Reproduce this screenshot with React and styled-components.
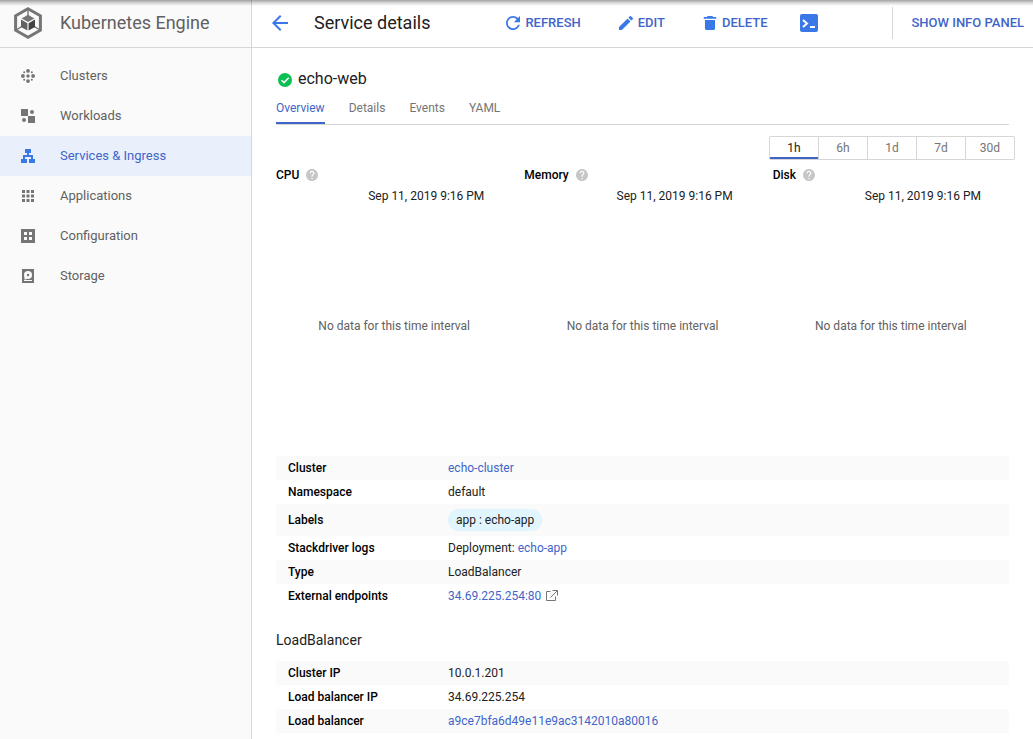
import React, { useState } from "react";
import styled, { createGlobalStyle, css } from "styled-components";

const color = {
  blue: "#3b78e7",
  link: "#3f65c9",
  grey: "#757575",
  text: "#212121",
  line: "#d6d6d6",
  stripe: "#fafafa",
};

const GlobalStyle = createGlobalStyle`
  *, *::before, *::after { box-sizing: border-box; }
  body {
    margin: 0;
    background: #fff;
    color: ${color.text};
    font: 400 12px/16px Roboto, "Liberation Sans", sans-serif;
  }
  button { font: inherit; color: inherit; background: none; border: 0; padding: 0; cursor: pointer; }
  a { color: ${color.link}; text-decoration: none; }
  h1, h2, h3, ul { margin: 0; padding: 0; }
  svg { display: block; flex: none; }
`;

const Page = styled.div`
  display: grid;
  grid-template-columns: 252px minmax(0, 1fr);
  min-height: 100vh;
`;

const TopShadow = styled.div`
  position: fixed;
  inset: 0 0 auto 0;
  height: 6px;
  background: linear-gradient(rgba(0, 0, 0, 0.36), rgba(0, 0, 0, 0.14) 50%, rgba(0, 0, 0, 0));
  pointer-events: none;
`;

const Sidebar = styled.aside`
  background: #fafafa;
  border-right: 1px solid ${color.line};
`;

const Brand = styled.div`
  display: flex;
  align-items: center;
  gap: 18px;
  height: 48px;
  padding: 0 0 2px 14px;
  border-bottom: 1px solid ${color.line};
  color: #616161;
  font-size: 18px;
  line-height: 24px;
`;

const NavList = styled.ul`
  list-style: none;
  padding-top: 8px;
`;

const NavLink = styled.a`
  display: flex;
  align-items: center;
  gap: 25px;
  height: 40px;
  padding-left: 21px;
  font-size: 13px;
  color: ${(p) => (p.$active ? color.link : "#616161")};
  background: ${(p) => (p.$active ? "#e9f0fb" : "transparent")};
  svg { color: ${(p) => (p.$active ? color.blue : color.grey)}; }
`;

const Toolbar = styled.header`
  display: flex;
  align-items: center;
  height: 48px;
  padding: 0 9px 2px 20px;
  border-bottom: 1px solid ${color.line};
`;

const Title = styled.h1`
  margin: 0 76px 0 26px;
  font-size: 18px;
  line-height: 24px;
  font-weight: 400;
  white-space: nowrap;
`;

const Actions = styled.div`
  display: flex;
  align-items: center;
  gap: 38px;
`;

const ActionButton = styled.button`
  display: flex;
  align-items: center;
  gap: 5px;
  color: ${color.link};
  font-size: 13px;
  font-weight: 500;
  white-space: nowrap;
  svg { color: ${color.blue}; }
`;

const ShellSlot = styled.div`
  margin-left: 32px;
`;

const InfoPanel = styled.div`
  display: flex;
  align-items: center;
  height: 32px;
  margin-left: auto;
  padding-left: 18px;
  border-left: 1px solid ${color.line};
`;

const Content = styled.main`
  padding: 20px 24px 0;
`;

const ServiceName = styled.h2`
  display: flex;
  align-items: center;
  gap: 6px;
  height: 22px;
  padding-left: 2px;
  font-size: 16px;
  line-height: 22px;
  font-weight: 400;
  svg { margin-top: 2px; }
`;

const Tabs = styled.div`
  display: flex;
  gap: 24px;
  height: 35px;
  border-bottom: 1px solid ${color.line};
`;

const Tab = styled.button`
  height: 34px;
  padding-top: 4px;
  border-bottom: 2px solid ${(p) => (p.$active ? color.link : "transparent")};
  color: ${(p) => (p.$active ? color.link : color.grey)};
`;

const RangeGroup = styled.div`
  display: flex;
  width: 246px;
  margin: 11px -6px 0 auto;
  border: 1px solid ${color.line};
  border-radius: 2px;
`;

const RangeButton = styled.button`
  flex: 1 1 0;
  height: 22px;
  color: ${color.grey};
  & + & { border-left: 1px solid ${color.line}; }
  ${(p) =>
    p.$active &&
    css`
      color: ${color.text};
      box-shadow: inset 0 -2px ${color.link};
    `}
`;

const Charts = styled.section`
  display: grid;
  grid-template-columns: repeat(3, minmax(0, 1fr));
  gap: 12px;
  padding-top: 7px;
`;

const Chart = styled.article`
  display: flex;
  flex-direction: column;
  height: 289px;
`;

const ChartTitle = styled.h3`
  display: flex;
  align-items: center;
  gap: 7px;
  font-size: 12px;
  line-height: 16px;
  font-weight: 500;
  color: #000;
  svg { color: #c6c6c6; }
`;

const ChartTime = styled.time`
  margin-top: 5px;
  padding-right: 28px;
  text-align: right;
`;

const EmptyNote = styled.p`
  margin: 114px 0 0;
  text-align: center;
  color: #616161;
`;

const Facts = styled.table`
  width: 100%;
  border-collapse: collapse;
  tr:nth-child(odd) { background: ${color.stripe}; }
  th, td { height: 24px; padding: 0; text-align: left; }
  th { width: 172px; padding-left: 12px; font-weight: 500; color: #000; }
`;

const Inline = styled.span`
  display: flex;
  align-items: center;
  gap: 5px;
  svg { color: ${color.grey}; }
`;

const Chip = styled.span`
  display: block;
  width: max-content;
  margin: 5px 0;
  padding: 3px 8px;
  border-radius: 11px;
  background: #e1f5fe;
`;

const SectionTitle = styled.h3`
  padding: 22px 0 11px;
  font-size: 14px;
  line-height: 20px;
  font-weight: 400;
`;

const Icon = ({ size = 14, box = "0 0 14 14", children, ...rest }) => (
  <svg width={size} height={size} viewBox={box} fill="currentColor" aria-hidden="true" {...rest}>
    {children}
  </svg>
);

const EngineLogo = () => (
  <svg width="28" height="32" viewBox="0 0 28 32" aria-hidden="true">
    <path d="M14 1.8 26.4 8.8V23.2L14 30.2 1.6 23.2V8.8Z" fill="none" stroke="#757575" strokeWidth="3" />
    <path d="M14 2v8M2 23l6-3.6M26 23l-6-3.6" stroke="#757575" strokeWidth="1.4" />
    <path d="M14 7.8 20.4 11.4 14 15 7.6 11.4Z" fill="#757575" />
    <path d="M7 12.6 13.4 16.2V23.6L7 20Z" fill="#616161" />
    <path d="M21 12.6 14.6 16.2V23.6L21 20Z" fill="#424242" />
  </svg>
);

const ClustersIcon = () => (
  <Icon>
    <circle cx="7" cy="7" r="1.7" />
    <circle cx="7" cy="1.9" r="1.9" />
    <circle cx="7" cy="12.1" r="1.9" />
    <circle cx="1.9" cy="7" r="1.9" />
    <circle cx="12.1" cy="7" r="1.9" />
    <circle cx="3.2" cy="3.2" r="1" />
    <circle cx="10.8" cy="3.2" r="1" />
    <circle cx="3.2" cy="10.8" r="1" />
    <circle cx="10.8" cy="10.8" r="1" />
  </Icon>
);

const WorkloadsIcon = () => (
  <Icon>
    <path d="M0 0h7v7H0zM7 7h7v7H7z" />
    <circle cx="11" cy="3" r="2" />
    <circle cx="3" cy="11" r="2" />
  </Icon>
);

const ServicesIcon = () => (
  <Icon>
    <path d="M4 0h6v4H8v2h4v4h2v4H8v-4h2V8H4v2h2v4H0v-4h2V6h4V4H4z" />
  </Icon>
);

const ApplicationsIcon = () => (
  <Icon>
    <path d="M1 1h3v3H1zM5.5 1h3v3h-3zM10 1h3v3h-3zM1 5.5h3v3H1zM5.5 5.5h3v3h-3zM10 5.5h3v3h-3zM1 10h3v3H1zM5.5 10h3v3h-3zM10 10h3v3h-3z" />
  </Icon>
);

const ConfigurationIcon = () => (
  <Icon>
    <path fillRule="evenodd" d="M0 0h14v14H0zM3 3v3h3V3zM8 3v3h3V3zM3 8v3h3V8zM8 8v3h3V8z" />
  </Icon>
);

const StorageIcon = () => (
  <Icon>
    <path d="M1 0h12v14H1z" />
    <circle cx="7" cy="6" r="4" fill="#fafafa" />
    <circle cx="7" cy="6" r="1.2" />
    <path d="M3 11h8v1H3zM3.6 7.6 6 9.4 5 10.4H3.4z" fill="#fafafa" />
  </Icon>
);

const BackIcon = () => (
  <Icon size={16} box="4 4 16 16">
    <path d="M20 11H7.83l5.59-5.59L12 4l-8 8 8 8 1.41-1.41L7.83 13H20v-2z" />
  </Icon>
);

const RefreshIcon = () => (
  <Icon box="4 4 16 16">
    <path d="M17.65 6.35C16.2 4.9 14.21 4 12 4c-4.42 0-7.99 3.58-7.99 8s3.57 8 7.99 8c3.73 0 6.84-2.55 7.73-6h-2.08c-.82 2.33-3.04 4-5.65 4-3.31 0-6-2.69-6-6s2.69-6 6-6c1.66 0 3.14.69 4.22 1.78L13 11h7V4l-2.35 2.35z" />
  </Icon>
);

const EditIcon = () => (
  <Icon box="3 3 18 18">
    <path d="M3 17.25V21h3.75L17.81 9.94l-3.75-3.75L3 17.25zM20.71 7.04c.39-.39.39-1.02 0-1.41l-2.34-2.34c-.39-.39-1.02-.39-1.41 0l-1.83 1.83 3.75 3.75 1.83-1.83z" />
  </Icon>
);

const DeleteIcon = () => (
  <Icon box="3 3 18 18">
    <path d="M5.5 8v11c0 1.1.9 2 2 2h9c1.1 0 2-.9 2-2V8h-13zM20 4.2h-4L15 3H9L8 4.2H4v2.3h16V4.2z" />
  </Icon>
);

const ShellIcon = () => (
  <Icon size={18} box="0 0 18 18">
    <rect width="18" height="18" rx="2" />
    <path d="M3 6l4 3.5L3 13" fill="none" stroke="#fff" strokeWidth="2" />
    <path d="M10 12h5v2h-5z" fill="#fff" />
  </Icon>
);

const CheckIcon = () => (
  <Icon>
    <circle cx="7" cy="7" r="7" fill="#0bc052" />
    <path d="M3.5 7.2 6 9.6 10.7 4.8" fill="none" stroke="#fff" strokeWidth="1.5" />
  </Icon>
);

const HelpIcon = () => (
  <Icon size={12} box="2 2 20 20">
    <path d="M12 2C6.48 2 2 6.48 2 12s4.48 10 10 10 10-4.48 10-10S17.52 2 12 2zm1 17h-2v-2h2v2zm2.07-7.75l-.9.92C13.45 12.9 13 13.5 13 15h-2v-.5c0-1.1.45-2.1 1.17-2.83l1.24-1.26c.37-.36.59-.86.59-1.41 0-1.1-.9-2-2-2s-2 .9-2 2H8c0-2.21 1.79-4 4-4s4 1.79 4 4c0 .88-.36 1.68-.93 2.25z" />
  </Icon>
);

const ExternalIcon = () => (
  <Icon size={12} box="0 0 12 12">
    <path d="M4.5 1.5h-4v9h9v-4M6.5.5h5v5M11.5.5 4.5 7.5" fill="none" stroke="currentColor" />
  </Icon>
);

const NAV = [
  ["Clusters", ClustersIcon],
  ["Workloads", WorkloadsIcon],
  ["Services & Ingress", ServicesIcon],
  ["Applications", ApplicationsIcon],
  ["Configuration", ConfigurationIcon],
  ["Storage", StorageIcon],
];

const DETAILS = [
  ["Cluster", <a href="#cluster">echo-cluster</a>],
  ["Namespace", "default"],
  ["Labels", <Chip>app : echo-app</Chip>],
  ["Stackdriver logs", <>Deployment: <a href="#logs">echo-app</a></>],
  ["Type", "LoadBalancer"],
  ["External endpoints", <Inline><a href="#endpoint">34.69.225.254:80</a><ExternalIcon /></Inline>],
];

const BALANCER = [
  ["Cluster IP", "10.0.1.201"],
  ["Load balancer IP", "34.69.225.254"],
  ["Load balancer", <a href="#balancer">a9ce7bfa6d49e11e9ac3142010a80016</a>],
];

const FactTable = ({ rows }) => (
  <Facts>
    <tbody>
      {rows.map(([label, value]) => (
        <tr key={label}>
          <th scope="row">{label}</th>
          <td>{value}</td>
        </tr>
      ))}
    </tbody>
  </Facts>
);

export default function App() {
  const [tab, setTab] = useState("Overview");
  const [range, setRange] = useState("1h");

  return (
    <>
      <GlobalStyle />
      <Page>
        <Sidebar>
          <Brand><EngineLogo />Kubernetes Engine</Brand>
          <nav>
            <NavList>
              {NAV.map(([label, Glyph]) => (
                <li key={label}>
                  <NavLink href="#nav" $active={label === "Services & Ingress"}>
                    <Glyph />{label}
                  </NavLink>
                </li>
              ))}
            </NavList>
          </nav>
        </Sidebar>
        <div>
          <Toolbar>
            <ActionButton aria-label="Back"><BackIcon /></ActionButton>
            <Title>Service details</Title>
            <Actions>
              <ActionButton><RefreshIcon />REFRESH</ActionButton>
              <ActionButton><EditIcon />EDIT</ActionButton>
              <ActionButton><DeleteIcon />DELETE</ActionButton>
            </Actions>
            <ShellSlot>
              <ActionButton aria-label="Open in Cloud Shell"><ShellIcon /></ActionButton>
            </ShellSlot>
            <InfoPanel><ActionButton>SHOW INFO PANEL</ActionButton></InfoPanel>
          </Toolbar>
          <Content>
            <ServiceName><CheckIcon />echo-web</ServiceName>
            <Tabs role="tablist">
              {["Overview", "Details", "Events", "YAML"].map((t) => (
                <Tab key={t} role="tab" aria-selected={t === tab} $active={t === tab} onClick={() => setTab(t)}>
                  {t}
                </Tab>
              ))}
            </Tabs>
            <RangeGroup>
              {["1h", "6h", "1d", "7d", "30d"].map((r) => (
                <RangeButton key={r} aria-pressed={r === range} $active={r === range} onClick={() => setRange(r)}>
                  {r}
                </RangeButton>
              ))}
            </RangeGroup>
            <Charts>
              {["CPU", "Memory", "Disk"].map((name) => (
                <Chart key={name}>
                  <ChartTitle>{name}<HelpIcon /></ChartTitle>
                  <ChartTime>Sep 11, 2019 9:16 PM</ChartTime>
                  <EmptyNote>No data for this time interval</EmptyNote>
                </Chart>
              ))}
            </Charts>
            <FactTable rows={DETAILS} />
            <SectionTitle>LoadBalancer</SectionTitle>
            <FactTable rows={BALANCER} />
          </Content>
        </div>
      </Page>
      <TopShadow />
    </>
  );
}
